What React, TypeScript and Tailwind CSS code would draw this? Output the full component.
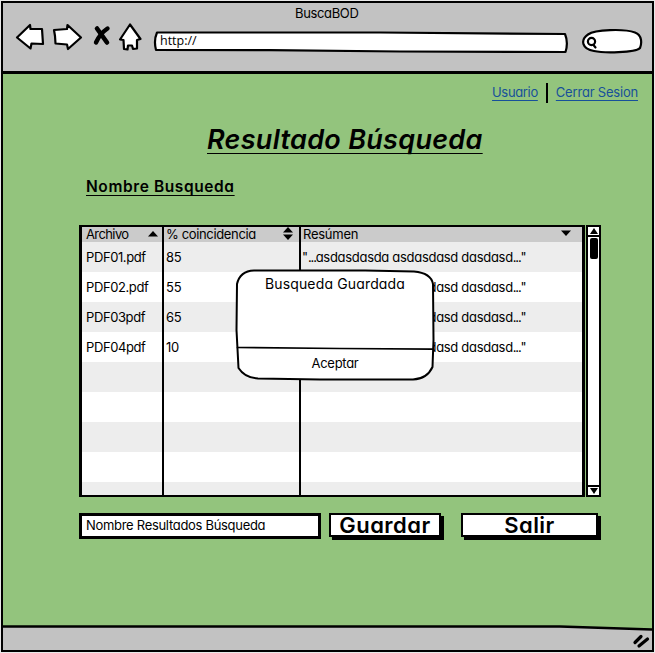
import type { ReactNode } from "react";

const ink = {
  stroke: "#000",
  strokeWidth: 2.2,
  strokeLinejoin: "round" as const,
  strokeLinecap: "round" as const,
};

function BrowserBar() {
  return (
    <header className="relative h-[71px] shrink-0 border-b-[3px] border-black bg-[#c2c2c2]">
      <h1 className="pt-[2px] pl-[292px] text-[13px] leading-[16px] tracking-[-0.35px]">BuscaBOD</h1>
      <nav className="flex items-start pt-px pl-[11px]">
        <svg width="32" height="32" viewBox="14 22 32 32" fill="#fff" {...ink}>
          <path d="M17 37.5 L30 25 L30.5 29 L42 29 L43 44 L31.5 43.5 L30.5 48.5 Z" />
        </svg>
        <svg className="ml-[6px]" width="32" height="32" viewBox="52 22 32 32" fill="#fff" {...ink}>
          <path d="M54 30 L67 29 L67.5 25 L81 37.5 L68 49 L67 44.5 L55.5 43.5 L55 36 Z" />
        </svg>
        <svg className="ml-[8px]" width="20" height="32" viewBox="92 22 20 32" fill="none" {...ink}>
          <path d="M97 28.5 L107 42.5" strokeWidth="4.6" />
          <path d="M107.5 28.5 Q100 33.5 96 42.5" strokeWidth="4.4" />
        </svg>
        <svg className="ml-[6px]" width="25" height="32" viewBox="118 22 25 32" fill="#fff" {...ink}>
          <path d="M130 24.5 L140.5 39 L137 40 L137 48.5 L133 49 L132 45.5 L128 45.5 L127.5 49.5 L124 49 L123.5 40 L120 39.5 Z" />
        </svg>
        <div className="relative ml-[9px] h-[32px] w-[418px]">
          <svg className="absolute inset-0" width="418" height="34" viewBox="152 21.5 418 34" fill="#fff" {...ink}>
            <path d="M157 32 L380 32 L565 33.5 Q568.5 42 565.5 51.5 L400 51 L270 49.7 L156 49.5 Q153.5 40 157 32 Z" />
          </svg>
          <span className="relative block pt-[11px] pl-[8px] font-['Open_Sans',sans-serif] text-[12.5px] leading-[16px]">http://</span>
        </div>
        <svg className="ml-[11px]" width="64" height="34" viewBox="581 22 64 34" fill="#fff" {...ink}>
          <path d="M594 51 C582 49 580 40 588 34.5 C595 29.5 624 28.5 635 32.5 C642 35 642 43 640 48 C635 53 603 53 594 51 Z" />
          <circle cx="591.5" cy="41.5" r="3.6" />
          <path d="M593.5 45 L595.5 47.5" />
        </svg>
      </nav>
    </header>
  );
}

function Triangle({ down = false }: { down?: boolean }) {
  return (
    <svg width="10" height="6" viewBox="0 0 10 6">
      <path d={down ? "M0 0.5 H10 L5 6 Z" : "M0 5.5 L5 0 L10 5.5 Z"} />
    </svg>
  );
}

const rows = [
  ["PDF01.pdf", "85"],
  ["PDF02.pdf", "55"],
  ["PDF03pdf", "65"],
  ["PDF04pdf", "10"],
  ["", ""],
  ["", ""],
  ["", ""],
  ["", ""],
  ["", ""],
];

const grid = "grid grid-cols-[82px_137px_1fr]";

function ResultsTable() {
  return (
    <div className="flex h-[272px]">
      <div className="relative w-[506px] overflow-hidden border-x-[3px] border-y-2 border-black bg-white">
        <div className={`${grid} h-[15px] bg-[#cbcbcb] text-[13px] leading-[15px]`}>
          <span className="flex h-[15px] items-center justify-between border-r-2 border-black pr-[4px] pl-[4px] tracking-[-0.6px]">
            Archivo
            <span className="pb-[2px]">
              <Triangle />
            </span>
          </span>
          <span className="flex h-[15px] items-center justify-between border-r-2 border-black pr-[6px] pl-[2px] tracking-[-0.35px]">
            % coincidencia
            <span className="flex flex-col gap-px pb-[2px]">
              <Triangle />
              <Triangle down />
            </span>
          </span>
          <span className="flex h-[15px] items-center justify-between pr-[11px] pl-[2px] tracking-[-0.25px]">
            Resúmen
            <span className="pb-[4px]">
              <Triangle down />
            </span>
          </span>
        </div>
        {rows.map(([file, match], i) => (
          <div key={i} className={`${grid} h-[30px] text-[13px] leading-[30px] odd:bg-white even:bg-[#ededed]`}>
            <span className="border-r-2 border-black pl-[4px] tracking-[-0.4px]">{file}</span>
            <span className="border-r-2 border-black pl-[2px] tracking-[-0.2px]">{match}</span>
            <span className="pl-[1px]">
              {file && (
                <>
                  "<span className="tracking-[-1.2px]">...</span>
                  <span className="tracking-[-0.3px]">asdasdasda asdasdasd dasdasd</span>
                  <span className="tracking-[-1.2px]">...</span>"
                </>
              )}
            </span>
          </div>
        ))}
      </div>
      <div className="ml-px flex w-[15px] flex-col items-center border-2 border-black bg-white">
        <span className="flex h-[10px] w-full items-center justify-center border-b-2 border-black">
          <svg width="8" height="6" viewBox="0 0 8 6"><path d="M0 6 L4 0 L8 6 Z" /></svg>
        </span>
        <span className="mt-px h-[21px] w-[8px] rounded-[2px] bg-black" />
        <span className="mt-auto flex h-[10px] w-full items-center justify-center border-t-2 border-black">
          <svg width="8" height="6" viewBox="0 0 8 6"><path d="M0 0 H8 L4 6 Z" /></svg>
        </span>
      </div>
    </div>
  );
}

function SketchButton({ className, children }: { className: string; children: ReactNode }) {
  return (
    <button
      className={`${className} h-[24px] border-2 border-black bg-white text-center text-[22px] leading-[21px] font-semibold shadow-[3px_3px_0_#000]`}
    >
      {children}
    </button>
  );
}

function SavedDialog() {
  return (
    <div role="dialog" className="absolute top-[268px] left-[234px] h-[114px] w-[202px] text-center">
      <svg className="absolute inset-0" width="202" height="114" viewBox="234 268 202 114" fill="#fff" {...ink} strokeWidth="2">
        <path d="M237 284 Q240 271 254 270.5 L365 270.5 L414 271.5 Q431 273 433 284 L433.5 340 L432.5 367 Q427 379 413 379.5 L320 379.5 L258 378.5 Q245 378 238.5 368 L236.5 330 Z" />
        <path d="M237.5 347.5 L340 348.5 L432.5 349.2" fill="none" strokeWidth="1.7" />
      </svg>
      <p className="relative pt-[6px] text-[14px] leading-[20px] tracking-[0.15px]">Busqueda Guardada</p>
      <button className="relative mt-[59px] text-[13px] leading-[20px] tracking-[-0.3px]">Aceptar</button>
    </div>
  );
}

export default function App() {
  return (
    <div className="relative h-[653px] w-[655px] overflow-hidden bg-[#e8e8e8] pt-px pl-px font-[Inter,sans-serif] text-black [font-feature-settings:'cv11'_1]">
      <div className="flex h-[651px] w-[653px] flex-col border-2 border-black bg-[#93c47d]">
        <BrowserBar />
        <main className="flex-1">
          <div className="flex h-[35px] items-center justify-end pt-[2px] pr-[14px] text-[13px] text-[#17509a]">
            <a className="tracking-[-0.35px] underline underline-offset-[3px]">Usuario</a>
            <span className="mx-[8px] h-[20px] w-[2px] bg-black" />
            <a className="tracking-[-0.2px] underline underline-offset-[3px]">Cerrar Sesion</a>
          </div>
          <h2 className="mt-[13px] ml-[204px] text-[27px] leading-[36px] font-semibold tracking-[0.3px] italic underline decoration-1 underline-offset-[4px] [text-decoration-skip-ink:none]">
            Resultado Búsqueda
          </h2>
          <h3 className="mt-[17px] ml-[83px] text-[15.5px] leading-[24px] font-semibold tracking-[0.6px] underline decoration-1 underline-offset-[3px] [text-decoration-skip-ink:none]">
            Nombre Busqueda
          </h3>
          <section className="mt-[26px] ml-[76px] w-[523px]">
            <ResultsTable />
            <div className="mt-[16px] flex text-[13px]">
              <div className="h-[26px] w-[242px] border-[3px] border-black bg-white pl-[4px] leading-[19px] tracking-[-0.3px]">
                Nombre Resultados Búsqueda
              </div>
              <SketchButton className="ml-[8px] w-[112px] tracking-[0.5px]">Guardar</SketchButton>
              <SketchButton className="ml-[20px] w-[137px] tracking-[0.4px]">Salir</SketchButton>
            </div>
          </section>
        </main>
        <footer className="relative h-[26px] shrink-0">
          <svg className="absolute inset-0" width="649" height="26" viewBox="3 623 649 26" fill="#c2c2c2">
            <path d="M3 625.5 H560 L652 628.5 V650 H3 Z" />
            <path d="M3 625.5 H560 L652 628.5" fill="none" stroke="#000" strokeWidth="2.6" />
            <path d="M635 641.5 L641 635.5 M639 645 L647.5 638" fill="none" stroke="#000" strokeWidth="3.2" strokeLinecap="round" />
          </svg>
        </footer>
      </div>
      <SavedDialog />
    </div>
  );
}
